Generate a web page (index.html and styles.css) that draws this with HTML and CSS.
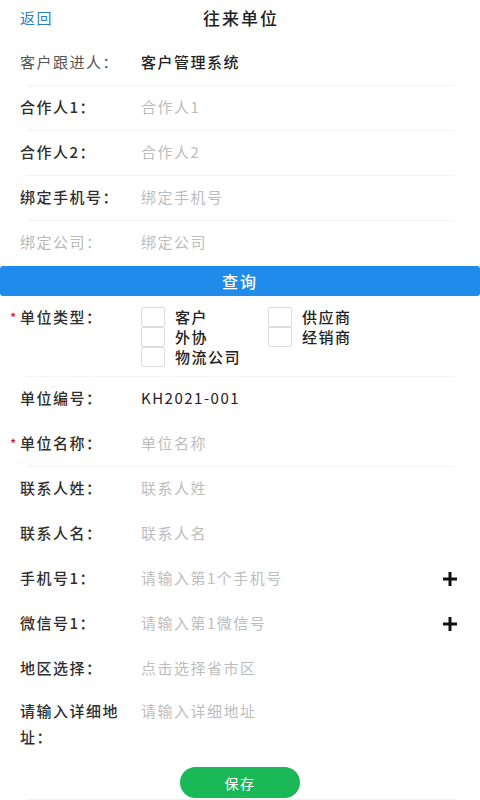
FILE: index.html
```html
<!DOCTYPE html>
<html lang="zh-CN">
<head>
    <meta charset="UTF-8">
    <meta name="viewport" content="width=device-width, initial-scale=1.0">
    <title>往来单位</title>
    <link rel="stylesheet" href="styles.css">
</head>
<body>
    <div class="header">
        <span class="back">返回</span>
        <span class="title">往来单位</span>
    </div>

    <div class="row">
        <div class="label light">客户跟进人：</div>
        <div class="value strong">客户管理系统</div>
    </div>
    <div class="row">
        <div class="label">合作人1：</div>
        <div class="value hint">合作人1</div>
    </div>
    <div class="row">
        <div class="label">合作人2：</div>
        <div class="value hint">合作人2</div>
    </div>
    <div class="row">
        <div class="label">绑定手机号：</div>
        <div class="value hint">绑定手机号</div>
    </div>
    <div class="row plain">
        <div class="label muted">绑定公司：</div>
        <div class="value hint">绑定公司</div>
    </div>

    <div class="query">查询</div>

    <div class="row type-row">
        <div class="label req">单位类型：</div>
        <div class="options">
            <label class="opt"><span class="box"></span>客户</label>
            <label class="opt"><span class="box"></span>供应商</label>
            <label class="opt"><span class="box"></span>外协</label>
            <label class="opt"><span class="box"></span>经销商</label>
            <label class="opt"><span class="box"></span>物流公司</label>
        </div>
    </div>

    <div class="row plain">
        <div class="label">单位编号：</div>
        <div class="value">KH2021-001</div>
    </div>
    <div class="row">
        <div class="label req">单位名称：</div>
        <div class="value hint">单位名称</div>
    </div>
    <div class="row plain">
        <div class="label">联系人姓：</div>
        <div class="value hint">联系人姓</div>
    </div>
    <div class="row plain">
        <div class="label">联系人名：</div>
        <div class="value hint">联系人名</div>
    </div>
    <div class="row plain">
        <div class="label">手机号1：</div>
        <div class="value hint">请输入第1个手机号</div>
        <svg class="plus" width="14" height="14" viewBox="0 0 14 14"><rect x="5.5" y="0" width="3" height="14"/><rect x="0" y="5.5" width="14" height="3"/></svg>
    </div>
    <div class="row plain">
        <div class="label">微信号1：</div>
        <div class="value hint">请输入第1微信号</div>
        <svg class="plus" width="14" height="14" viewBox="0 0 14 14"><rect x="5.5" y="0" width="3" height="14"/><rect x="0" y="5.5" width="14" height="3"/></svg>
    </div>
    <div class="row plain">
        <div class="label">地区选择：</div>
        <div class="value hint">点击选择省市区</div>
    </div>
    <div class="row plain address">
        <div class="label">请输入详细地址：</div>
        <div class="value hint">请输入详细地址</div>
    </div>

    <div class="footer">
        <button class="save">保存</button>
    </div>
</body>
</html>
```

FILE: styles.css
```css
body {
    margin: 0;
    background: #fff;
    color: #333;
    font-family: "Noto Sans CJK SC", "Noto Sans", sans-serif;
    font-size: 15px;
    letter-spacing: 1.5px;
}
.header {
    height: 41px;
    display: flex;
    align-items: flex-start;
    padding: 0 20px;
    line-height: 36px;
}
.back {
    color: #2a7fd0;
}
.title {
    margin-left: 150px;
    font-size: 17px;
    font-weight: 500;
    letter-spacing: 2px;
    color: #222;
}
.row {
    display: flex;
    align-items: flex-start;
    height: 45px;
    box-sizing: border-box;
    padding: 11px 0 0 20px;
    line-height: 20px;
    background: linear-gradient(#f4f4f4, #f4f4f4) no-repeat 27px 100% / 428px 1px;
}
.row.plain {
    background: none;
}
.label {
    width: 121px;
    flex-shrink: 0;
    color: #2e2e2e;
    font-weight: 500;
}
.label.light {
    color: #555;
    font-weight: 400;
}
.label.muted {
    color: #b8b8b8;
    font-weight: 400;
}
.req::before {
    content: "*";
    display: inline-block;
    width: 10px;
    margin-left: -10px;
    color: #c8282e;
    font-size: 13px;
    letter-spacing: 0;
}
.value {
    color: #222;
}
.value.strong {
    font-weight: 500;
}
.value.hint {
    color: #bdbdbd;
}
.plus {
    margin-left: auto;
    margin-right: 23px;
    margin-top: 4px;
    fill: #111;
}
.query {
    height: 30px;
    line-height: 30px;
    background: #1f8ceb;
    border-radius: 3px;
    color: #fff;
    text-align: center;
    font-size: 16px;
    font-weight: 500;
    letter-spacing: 2px;
}
.type-row {
    height: 81px;
}
.options {
    display: grid;
    grid-template-columns: 127px 1fr;
}
.opt {
    display: flex;
    align-items: center;
    height: 20px;
    color: #222;
    font-weight: 500;
}
.box {
    width: 22px;
    height: 18px;
    margin-right: 10px;
    border: 1px solid #dcdcdc;
    border-radius: 2px;
}
.address {
    height: 52px;
    padding-top: 6px;
    line-height: 26px;
}
.footer {
    display: flex;
    justify-content: center;
    padding-top: 23px;
    background: linear-gradient(#f2f2f2, #f2f2f2) no-repeat 27px 100% / 428px 1px;
    height: 56px;
    box-sizing: border-box;
}
.save {
    width: 120px;
    height: 31px;
    border: none;
    border-radius: 16px;
    background: #1bb857;
    color: #fff;
    font-family: inherit;
    font-size: 14px;
    letter-spacing: 1.5px;
}
```
